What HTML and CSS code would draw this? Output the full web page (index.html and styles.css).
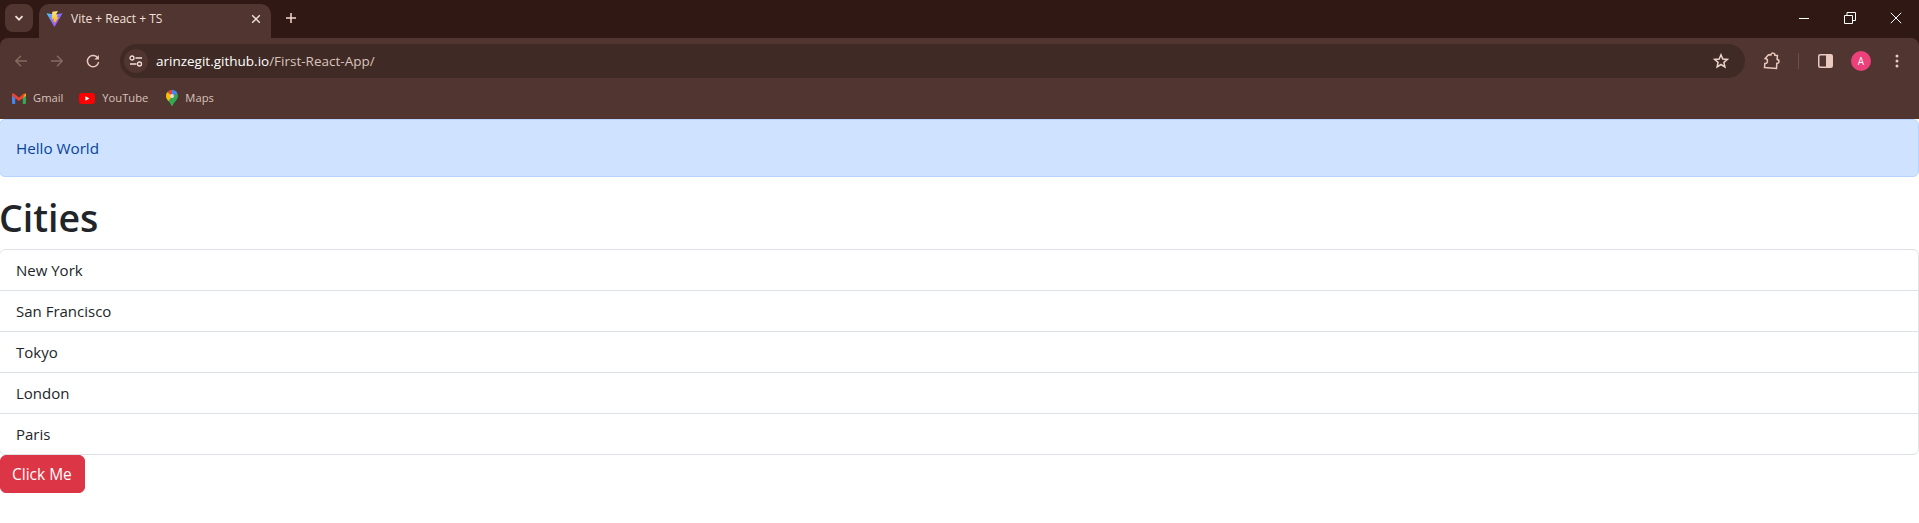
FILE: index.html
```html
<!DOCTYPE html>
<html lang="en">
<head>
<meta charset="utf-8">
<title>Vite + React + TS</title>
<link rel="stylesheet" href="styles.css">
</head>
<body>
<header class="browser">
  <div class="tabstrip">
    <button class="tab-search" aria-label="Search tabs">
      <svg width="12" height="12" viewBox="0 0 12 12"><path d="M2.500 4.200 6 7.700l3.500-3.500" fill="none" stroke="#f3e0da" stroke-width="1.700"/></svg>
    </button>
    <div class="tab">
      <svg class="favicon" width="17" height="16" viewBox="0 0 16 16">
        <defs>
          <linearGradient id="vitea" x1="0" y1="0" x2="1" y2="1"><stop offset="0" stop-color="#41d1ff"/><stop offset=".5" stop-color="#8a6cff"/><stop offset="1" stop-color="#bd34fe"/></linearGradient>
          <linearGradient id="viteb" x1="0" y1="0" x2="0" y2="1"><stop offset="0" stop-color="#ffea83"/><stop offset="1" stop-color="#ffa800"/></linearGradient>
        </defs>
        <path d="M0 2.200 8 3.600 16 2.200 8.300 15.600a.4.4 0 0 1-.7 0z" fill="url(#vitea)"/>
        <path d="M11.500 0 5.800.8 5.200 8.200l2-.4-.5 3 1.500-.4-.2 2.400 4.300-6.800-2 .4.800-3-1.800.3z" fill="url(#viteb)"/>
      </svg>
      <span class="tab-title">Vite + React + TS</span>
      <svg class="tab-close" width="10" height="10" viewBox="0 0 10 10"><path d="M1.200 1.200l7.600 7.600M8.800 1.200 1.200 8.800" stroke="#f3e0da" stroke-width="1.400"/></svg>
    </div>
    <svg class="new-tab" width="12" height="12" viewBox="0 0 12 12"><path d="M6 1v10M1 6h10" stroke="#f3d8d0" stroke-width="1.500"/></svg>
    <div class="window-controls">
      <svg width="12" height="12" viewBox="0 0 12 12"><path d="M1 6.500h10" stroke="#fff" stroke-width="1"/></svg>
      <svg width="12" height="12" viewBox="0 0 12 12"><path d="M.5 3.500h8v8h-8zM3 3.500V.5h8.500v8H8.500" fill="none" stroke="#fff"/></svg>
      <svg width="12" height="12" viewBox="0 0 12 12"><path d="M.8.8l10.400 10.400M11.200.8.8 11.200" stroke="#fff" stroke-width="1"/></svg>
    </div>
  </div>
  <div class="toolbar">
    <div class="nav-row">
      <svg class="nav-icon" width="14" height="14" viewBox="0 0 14 14"><path d="M13 7H2M7 1.800 1.800 7 7 12.200" fill="none" stroke="#86695f" stroke-width="1.500"/></svg>
      <svg class="nav-icon" width="14" height="14" viewBox="0 0 14 14"><path d="M1 7h11M7 1.800 12.200 7 7 12.200" fill="none" stroke="#86695f" stroke-width="1.500"/></svg>
      <svg class="nav-icon" width="14" height="14" viewBox="0 0 14 14"><path d="M12 4.500A5.600 5.600 0 1 0 12.600 8" fill="none" stroke="#ecc9bf" stroke-width="1.500"/><path d="M12.900.9v4.500H8.400z" fill="#ecc9bf"/></svg>
      <div class="omnibox">
        <span class="tune">
          <svg width="14" height="12" viewBox="0 0 14 12"><circle cx="3" cy="3" r="2" fill="none" stroke="#f3e0da" stroke-width="1.300"/><path d="M6.500 3H13M1 9h6.500" stroke="#f3e0da" stroke-width="1.300"/><circle cx="10.500" cy="9" r="2" fill="none" stroke="#f3e0da" stroke-width="1.300"/></svg>
        </span>
        <span class="url"><span class="url-host">arinzegit.github.io</span>/First-React-App/</span>
        <svg class="star" width="16" height="16" viewBox="0 0 16 16"><path d="M8 1.800 9.800 6l4.600.4-3.500 3 1 4.500L8 11.500 4.100 13.900l1-4.500-3.500-3L6.200 6z" fill="none" stroke="#ecd3cb" stroke-width="1.500"/></svg>
      </div>
      <svg class="extensions" width="18" height="18" viewBox="0 0 18 18"><path d="M6 3h2.500a2 2 0 0 1 4 0H15v4a2 2 0 0 1 0 4v5H3v-4a2.500 2.500 0 0 0 0-5z" transform="rotate(4 9 9)" fill="none" stroke="#ecc9bf" stroke-width="1.500"/></svg>
      <span class="separator"></span>
      <svg class="side-panel" width="15" height="14" viewBox="0 0 15 14"><rect x=".75" y=".75" width="13.500" height="12.500" rx="1.500" fill="none" stroke="#ecc9bf" stroke-width="1.500"/><rect x="8" y="1" width="6" height="12" fill="#ecc9bf"/></svg>
      <span class="avatar">A</span>
      <svg class="menu" width="4" height="14" viewBox="0 0 4 14"><circle cx="2" cy="2" r="1.500" fill="#ecc9bf"/><circle cx="2" cy="7" r="1.500" fill="#ecc9bf"/><circle cx="2" cy="12" r="1.500" fill="#ecc9bf"/></svg>
    </div>
    <nav class="bookmarks">
      <a class="bookmark">
        <svg width="14" height="11" viewBox="0 0 14 11"><path d="M0 2v8a1 1 0 0 0 1 1h2.200V5.200z" fill="#4285f4"/><path d="M14 2v8a1 1 0 0 1-1 1h-2.200V5.200z" fill="#34a853"/><path d="M10.800 1 14 .8V2.500l-3.200 2.700z" fill="#fbbc04"/><path d="M0 2.500V1.500C0 .4 1 0 1.800.5L7 4.500 12.200.5c.5-.3 1-.4 1.300-.2L10.800 5.200 7 8 3.200 5.200z" fill="#ea4335"/></svg>
        <span>Gmail</span>
      </a>
      <a class="bookmark">
        <svg width="16" height="11" viewBox="0 0 16 11"><rect width="16" height="11" rx="3" fill="#f00"/><path d="M6.400 3.200v4.600l4-2.300z" fill="#fff"/></svg>
        <span>YouTube</span>
      </a>
      <a class="bookmark">
        <svg width="12" height="16" viewBox="0 0 12 16">
          <path d="M6 0a6 6 0 0 1 6 6c0 3.800-4.300 6-5.500 9.700a.5.5 0 0 1-1 0C4.300 12 0 9.800 0 6a6 6 0 0 1 6-6z" fill="#34a853"/>
          <path d="M1.600 1.900A6 6 0 0 0 0 6c0 2 1.300 3.600 2.600 5.100L6 6z" fill="#fbbc04"/>
          <path d="M6 0a6 6 0 0 0-4.400 1.900L6 6l5.400-2.600A6 6 0 0 0 9.500 1.100L6 6z" fill="#ea4335"/>
          <path d="M6 0a6 6 0 0 1 5.400 3.400L6 6z" fill="#4285f4"/>
          <circle cx="6" cy="6" r="2" fill="#f4d9d0"/>
        </svg>
        <span>Maps</span>
      </a>
    </nav>
  </div>
</header>
<main class="page">
  <div class="alert">Hello World</div>
  <h1 class="heading">Cities</h1>
  <ul class="list">
    <li class="list-item">New York</li>
    <li class="list-item">San Francisco</li>
    <li class="list-item">Tokyo</li>
    <li class="list-item">London</li>
    <li class="list-item">Paris</li>
  </ul>
  <button class="btn">Click Me</button>
</main>
</body>
</html>
```

FILE: styles.css
```css
* { box-sizing: border-box; }
html, body { margin: 0; padding: 0; }
body {
  background: #fff;
  color: #212529;
  font-family: "Open Sans", "Noto Sans", sans-serif;
  font-size: 15px;
  line-height: 24px;
  height: 523px;
  overflow: hidden;
}

.browser { height: 119px; background: #301914; }
.tabstrip { height: 38px; display: flex; align-items: flex-start; padding: 4px 0 0 5px; }
.tab-search {
  width: 28px; height: 28px; border: 0; padding: 0;
  border-radius: 8px; background: #503530;
  display: flex; align-items: center; justify-content: center;
}
.tab {
  width: 232px; height: 34px; margin-left: 6px; padding: 0 10px 4px 7px;
  background: #503530; border-radius: 10px 10px 0 0;
  display: flex; align-items: center;
}
.favicon { flex: none; }
.tab-title {
  margin-left: 8px; flex: 1;
  font: 12px/16px "Open Sans", sans-serif; color: #f3e0da;
}
.tab-close { flex: none; }
.new-tab { margin: 8px 0 0 14px; }
.window-controls { margin-left: auto; display: flex; gap: 34px; padding: 8px 17px 0 0; }

.toolbar { height: 81px; background: #503530; border-radius: 8px 8px 0 0; }
.nav-row { height: 46px; display: flex; align-items: center; padding: 0 15px 0 14px; }
.nav-icon { margin-right: 22px; flex: none; }
.nav-icon:nth-child(3) { margin-right: 20px; }
.omnibox {
  width: 1625px; height: 34px; padding: 0 16px 0 4px;
  background: #402a25; border-radius: 17px;
  display: flex; align-items: center; flex: none;
}
.tune {
  width: 24px; height: 24px; border-radius: 50%; background: #503530;
  display: flex; align-items: center; justify-content: center; flex: none;
}
.url { margin-left: 8px; flex: 1; font: 13.500px/18px "Open Sans", sans-serif; color: #d8c3bc; }
.url-host { color: #fff; }
.extensions { margin-left: 17px; flex: none; }
.separator { width: 1px; height: 16px; margin-left: 18px; background: #6f5047; flex: none; }
.side-panel { margin-left: 19px; flex: none; }
.avatar {
  width: 20px; height: 20px; margin-left: 18px; border-radius: 50%;
  background: #ec407a; color: #fff; flex: none;
  font: 10px/20px "Open Sans", sans-serif; text-align: center;
}
.menu { margin-left: 24px; flex: none; }

.bookmarks { height: 35px; display: flex; align-items: center; padding: 0 0 7px 12px; }
.bookmark {
  display: flex; align-items: center; gap: 7px; margin-right: 18px;
  font: 11.200px/16px "Open Sans", sans-serif; color: #d9c3bc;
}
.bookmark:first-child { margin-right: 16px; }

.page { margin-left: -1px; width: 1920px; }
.alert {
  height: 58px; padding: 16px; margin-bottom: 16px;
  background: #cfe2ff; color: #084298;
  border: 1px solid #b6d4fe; border-radius: 6px;
  font-size: 15.200px;
}
.heading {
  margin: 0 0 8px; font-size: 37.500px; line-height: 50px; height: 48px; font-weight: 600;
  color: #212529;
}
.list { margin: 0; padding: 0; list-style: none; border: 1px solid #dee2e6; border-radius: 6px; }
.list-item { height: 41px; padding: 8px 16px; border-top: 1px solid #dee2e6; }
.list-item:first-child { height: 40px; border-top: 0; }
.btn {
  display: block; width: 85px; height: 38px; margin-left: 1px; padding: 6px 11px;
  background: #dc3545; color: #fff; border: 1px solid #dc3545; border-radius: 6px;
  font: inherit; font-size: 15.500px; text-align: left; white-space: nowrap;
}
```
